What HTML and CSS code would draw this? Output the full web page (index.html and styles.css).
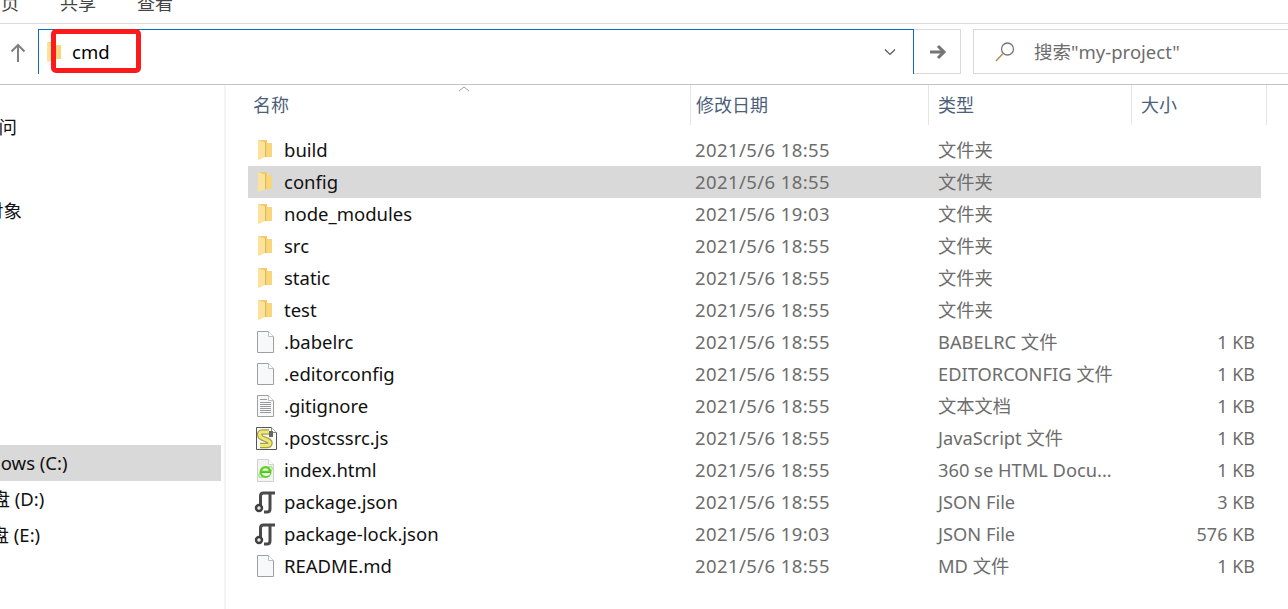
FILE: index.html
```html
<!DOCTYPE html>
<html>
<head>
  <title>my-project</title>
  <meta name="viewport" content="width=device-width, initial-scale=1.0">
  <link rel="stylesheet" href="styles.css">
</head>
<body>

<svg class="defs" width="0" height="0">
  <symbol id="i-folder" viewBox="-2 0 24 24">
    <path d="M3 2h8v3h5v14H3z" fill="#f2cb66"/>
    <path d="M10.500 5H16v14h-5.500z" fill="#f8d77c"/>
    <path d="M2 2l7 2.500V19l-6 3-1-1z" fill="#fbe39b"/>
    <path d="M9.500 4.500V19" stroke="#e3b852"/>
  </symbol>
  <symbol id="i-blank" viewBox="-2 0 24 24">
    <path d="M1.500 1.500h11l5 5v16h-16z" fill="#f7f8fa" stroke="#a0a0a0"/>
    <path d="M12.500 1.500v5h5" fill="#fff" stroke="#bcbcbc"/>
  </symbol>
  <symbol id="i-text" viewBox="-2 0 24 24">
    <path d="M1.500 1.500h11l5 5v16h-16z" fill="#f7f8fa" stroke="#a0a0a0"/>
    <path d="M12.500 1.500v5h5" fill="#fff" stroke="#bcbcbc"/>
    <path d="M4 5.500h7M4 8.500h11M4 10.500h11M4 12.500h11M4 14.500h11M4 16.500h11M4 18.500h11" stroke="#9a9a9a"/>
  </symbol>
  <symbol id="i-script" viewBox="-2 0 24 24">
    <path d="M.5 1.500h15l5 5v17H.5z" fill="#fbfbf5" stroke="#555"/>
    <path d="M15.500 1.500v5h5" fill="#fff" stroke="#888"/>
    <path d="M13 6H6C2.500 6 3 10.500 6 12l6 2.500c3 1.500 2.500 5-1 5H4" fill="none" stroke="#a5a04a" stroke-width="5.500"/>
    <path d="M13 6H6C2.500 6 3 10.500 6 12l6 2.500c3 1.500 2.500 5-1 5H4" fill="none" stroke="#efe77a" stroke-width="3"/>
    <path d="M13 5h4v6h-4z" fill="#666"/>
  </symbol>
  <symbol id="i-web" viewBox="-2 0 24 24">
    <path d="M1.500 1.500h11l5 5v17h-16z" fill="#f3f3ef" stroke="#cfcfcf"/>
    <path d="M12.500 1.500v5h5" fill="#fff" stroke="#d4d4d4"/>
    <ellipse cx="9.500" cy="14" rx="8" ry="3" transform="rotate(-35 9.500 14)" fill="none" stroke="#a6e07e"/>
    <circle cx="9.500" cy="14" r="6" fill="#5fce2d"/>
    <path d="M6.500 12.800a3 2.600 0 0 1 6 0zM5.500 15h9c-.3 2-2 3-4.500 3-2.200 0-3-1-3.500-1.500z" fill="#e9fbdc"/>
    <path d="M5 15h10v-1H5z" fill="#4fc020"/>
  </symbol>
  <symbol id="i-json" viewBox="-2 0 24 24">
    <path d="M4.500 15V6c0-2 1-3 3-3H19" fill="none" stroke="#4a4a4a" stroke-width="3"/>
    <path d="M14 3v16c0 2-1 3-3 3H8" fill="none" stroke="#4a4a4a" stroke-width="3"/>
    <circle cx="3" cy="18" r="3" fill="#e6e6e6" stroke="#3f3f3f" stroke-width="2.400"/>
  </symbol>
</svg>

<header class="tabs">
  <span class="tab tab-home">页</span>
  <span class="tab tab-share">共享</span>
  <span class="tab tab-view">查看</span>
</header>

<section class="toolbar">
  <div class="up">
    <svg width="16" height="20" viewBox="0 0 16 20"><path d="M8 19V2M1.500 8.500L8 2l6.500 6.500" fill="none" stroke="#808080" stroke-width="2"/></svg>
  </div>
  <div class="address">
    <svg class="addr-folder"><use href="#i-folder"/></svg>
    <span class="addr-text">cmd</span>
    <svg class="chevron" width="12" height="8" viewBox="0 0 12 8"><path d="M1 1.500l5 5 5-5" fill="none" stroke="#555" stroke-width="1.200"/></svg>
  </div>
  <div class="go">
    <svg width="18" height="16" viewBox="0 0 18 16"><path d="M1 8h13M9 2l6 6-6 6" fill="none" stroke="#757575" stroke-width="3"/></svg>
  </div>
  <div class="search">
    <svg width="22" height="22" viewBox="0 0 22 22"><circle cx="13.500" cy="8" r="6" fill="none" stroke="#777" stroke-width="1.300"/><path d="M9 12.500L2 20" stroke="#b98a5a" stroke-width="1.500"/></svg>
    <span>搜索"my-project"</span>
  </div>
  <div class="callout"></div>
</section>

<main class="body">
  <nav class="side">
    <div class="side-item side-access"><span class="clip clip-access">快速访问</span></div>
    <div class="side-item side-objects"><span class="clip clip-objects">3D 对象</span></div>
    <div class="side-item side-c on"><span class="clip clip-c">Windows (C:)</span></div>
    <div class="side-item"><span class="clip clip-d">本地磁盘 (D:)</span></div>
    <div class="side-item"><span class="clip clip-e">本地磁盘 (E:)</span></div>
  </nav>

  <section class="files">
    <div class="cols">
      <div class="col col-name">名称<svg class="sort" width="12" height="6" viewBox="0 0 12 6"><path d="M1 5l5-4 5 4" fill="none" stroke="#a0a0a0"/></svg></div>
      <div class="col col-date">修改日期</div>
      <div class="col col-type">类型</div>
      <div class="col col-size">大小</div>
    </div>

    <div class="list">
      <div class="row"><svg class="row-icon"><use href="#i-folder"/></svg><span class="name">build</span><span class="date">2021/5/6 18:55</span><span class="type">文件夹</span><span class="size"></span></div>
      <div class="row on"><svg class="row-icon"><use href="#i-folder"/></svg><span class="name">config</span><span class="date">2021/5/6 18:55</span><span class="type">文件夹</span><span class="size"></span></div>
      <div class="row"><svg class="row-icon"><use href="#i-folder"/></svg><span class="name">node_modules</span><span class="date">2021/5/6 19:03</span><span class="type">文件夹</span><span class="size"></span></div>
      <div class="row"><svg class="row-icon"><use href="#i-folder"/></svg><span class="name">src</span><span class="date">2021/5/6 18:55</span><span class="type">文件夹</span><span class="size"></span></div>
      <div class="row"><svg class="row-icon"><use href="#i-folder"/></svg><span class="name">static</span><span class="date">2021/5/6 18:55</span><span class="type">文件夹</span><span class="size"></span></div>
      <div class="row"><svg class="row-icon"><use href="#i-folder"/></svg><span class="name">test</span><span class="date">2021/5/6 18:55</span><span class="type">文件夹</span><span class="size"></span></div>
      <div class="row"><svg class="row-icon"><use href="#i-blank"/></svg><span class="name">.babelrc</span><span class="date">2021/5/6 18:55</span><span class="type">BABELRC 文件</span><span class="size">1 KB</span></div>
      <div class="row"><svg class="row-icon"><use href="#i-blank"/></svg><span class="name">.editorconfig</span><span class="date">2021/5/6 18:55</span><span class="type">EDITORCONFIG 文件</span><span class="size">1 KB</span></div>
      <div class="row"><svg class="row-icon"><use href="#i-text"/></svg><span class="name">.gitignore</span><span class="date">2021/5/6 18:55</span><span class="type">文本文档</span><span class="size">1 KB</span></div>
      <div class="row"><svg class="row-icon"><use href="#i-script"/></svg><span class="name">.postcssrc.js</span><span class="date">2021/5/6 18:55</span><span class="type">JavaScript 文件</span><span class="size">1 KB</span></div>
      <div class="row"><svg class="row-icon"><use href="#i-web"/></svg><span class="name">index.html</span><span class="date">2021/5/6 18:55</span><span class="type">360 se HTML Docu...</span><span class="size">1 KB</span></div>
      <div class="row"><svg class="row-icon"><use href="#i-json"/></svg><span class="name">package.json</span><span class="date">2021/5/6 18:55</span><span class="type">JSON File</span><span class="size">3 KB</span></div>
      <div class="row"><svg class="row-icon"><use href="#i-json"/></svg><span class="name">package-lock.json</span><span class="date">2021/5/6 19:03</span><span class="type">JSON File</span><span class="size">576 KB</span></div>
      <div class="row"><svg class="row-icon"><use href="#i-blank"/></svg><span class="name">README.md</span><span class="date">2021/5/6 18:55</span><span class="type">MD 文件</span><span class="size">1 KB</span></div>
    </div>
  </section>
</main>

</body>
</html>
```
FILE: styles.css
```css
html, body {
  margin: 0;
  height: 100%;
  overflow: hidden;
}
body {
  font-family: "Noto Sans", "Noto Sans CJK SC", sans-serif;
  font-size: 18px;
  line-height: 24px;
  color: #111;
  background-color: #fff;
  display: flex;
  flex-direction: column;
}
.defs {
  position: absolute;
}

/* ribbon tabs, cut off by the top of the shot */
.tabs {
  height: 23px;
  flex: none;
  display: flex;
  align-items: flex-end;
  overflow: hidden;
  border-bottom: 1px solid #dadada;
  color: #444;
}
.tab {
  flex: none;
  margin-bottom: 8px;
}
.tab-home {
  margin-left: 1px;
}
.tab-share {
  margin-left: 41px;
}
.tab-view {
  margin-left: 41px;
}

.toolbar {
  position: relative;
  height: 45px;
  flex: none;
  padding: 5px 0 10px;
  display: flex;
  border-bottom: 1px solid #c4c4c4;
}
.up {
  width: 36px;
  margin-right: 2px;
  flex: none;
  display: flex;
  align-items: center;
  justify-content: center;
  padding-top: 3px;
  box-sizing: border-box;
}
.address {
  width: 876px;
  flex: none;
  box-sizing: border-box;
  border: 1px solid #0a6cc0;
  border-bottom: none;
  display: flex;
  align-items: center;
  padding-left: 4px;
}
.addr-folder {
  width: 24px;
  height: 24px;
  flex: none;
}
.addr-text {
  margin-left: 5px;
  flex: 1;
  font-size: 18.5px;
  color: #000;
}
.chevron {
  margin-right: 17px;
}
.go {
  width: 47px;
  flex: none;
  box-sizing: border-box;
  border: 1px solid #d9d9d9;
  border-left: none;
  padding-left: 2px;
  display: flex;
  align-items: center;
  justify-content: center;
}
.search {
  flex: 1;
  margin-left: 12px;
  box-sizing: border-box;
  border: 1px solid #d9d9d9;
  border-right: none;
  display: flex;
  align-items: center;
  padding-left: 20px;
  font-size: 18.5px;
  color: #6d6d6d;
}
.search span {
  margin-left: 18px;
}
.callout {
  position: absolute;
  left: 51px;
  top: 5px;
  width: 90px;
  height: 44px;
  box-sizing: border-box;
  border: 5px solid #fb1b1b;
  border-radius: 5px;
}

.body {
  flex: 1;
  display: flex;
  min-height: 0;
}
.side {
  width: 226px;
  flex: none;
  box-sizing: border-box;
  padding: 24px 3px 0 0;
  border-right: 2px solid #f5f5f5;
  overflow: hidden;
}
.side-item {
  height: 36px;
  display: flex;
  align-items: center;
  white-space: nowrap;
  overflow: hidden;
  font-size: 18.5px;
}
.side-item.on {
  background-color: #d9d9d9;
}
.side-objects {
  margin-top: 48px;
}
.side-c {
  margin-top: 216px;
}
.clip {
  flex: none;
}
.clip-access {
  margin-left: -57px;
}
.clip-objects {
  margin-left: -44px;
}
.clip-c {
  margin-left: -44px;
}
.clip-d {
  margin-left: -64px;
}
.clip-e {
  margin-left: -65px;
}

.files {
  flex: 1;
  min-width: 0;
  display: flex;
  flex-direction: column;
}
.cols {
  height: 40px;
  flex: none;
  display: grid;
  grid-template-columns: 465px 238px 203px 135px;
}
.col {
  position: relative;
  padding: 0 0 0 27px;
  display: flex;
  align-items: center;
  border-right: 1px solid #e5e5e5;
  color: #4c607a;
  box-sizing: border-box;
}
.col-date {
  padding-left: 5px;
}
.col-type {
  padding-left: 9px;
}
.col-size {
  padding-left: 9px;
}
.sort {
  position: absolute;
  left: 232px;
  top: 1px;
}
.list {
  margin: 9px 0 0 22px;
  width: 1013px;
}
.row {
  height: 32px;
  display: flex;
  align-items: center;
  color: #6d6d6d;
  white-space: nowrap;
}
.row.on {
  background-color: #d9d9d9;
}
.row-icon {
  width: 24px;
  height: 24px;
  flex: none;
  margin-left: 6px;
}
.name {
  width: 411px;
  margin-left: 6px;
  flex: none;
  font-size: 18.5px;
  color: #111;
}
.date {
  width: 243px;
  flex: none;
  font-size: 18.5px;
  letter-spacing: .4px;
}
.type {
  width: 220px;
  flex: none;
  font-size: 18.3px;
}
.size {
  width: 97px;
  flex: none;
  text-align: right;
}
```
